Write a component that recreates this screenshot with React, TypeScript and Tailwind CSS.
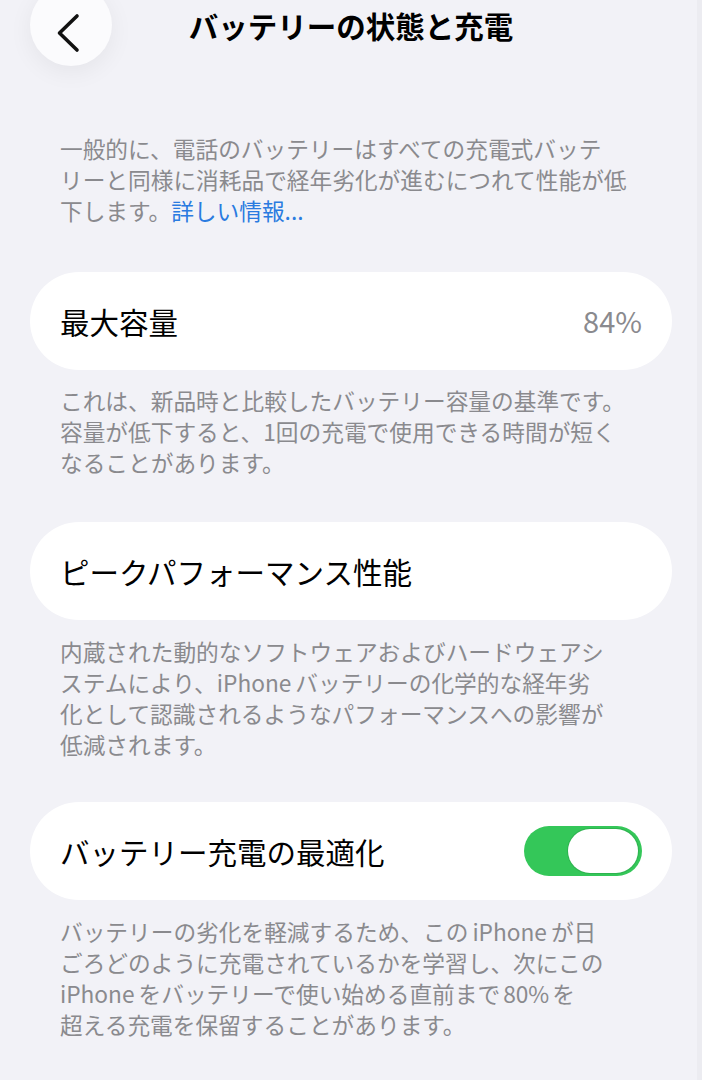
import React from "react";

const Para = ({ lines, className = "" }: { lines: React.ReactNode[]; className?: string }) => (
  <div className={`pl-[60px] pr-[40px] text-[22.7px] leading-[31px] text-[#8a8a8e] whitespace-nowrap ${className}`}>
    {lines.map((l, i) => (
      <div key={i}>{l}</div>
    ))}
  </div>
);

const Card = ({ children, className = "" }: { children: React.ReactNode; className?: string }) => (
  <div className={`mx-[30px] h-[98px] rounded-full bg-white flex items-center justify-between pl-[30px] pr-[30px] ${className}`}>
    {children}
  </div>
);

const IP = ({ l = true, r = true }: { l?: boolean; r?: boolean }) => (
  <span className={`${l ? "ml-[4px]" : ""} ${r ? "mr-[4px]" : ""}`}>iPhone</span>
);

export default function App() {
  return (
    <div
      className="w-full h-[1080px] overflow-hidden bg-[#f2f2f7] shadow-[inset_-5px_0_0_#ececf1]"
      style={{ fontFamily: '"Noto Sans CJK JP", "Noto Sans", sans-serif' }}
    >
      <div className="grid grid-cols-[112px_1fr_112px] h-[50px]">
        <div className="ml-[30px] mt-[-16px] w-[82px] h-[82px] rounded-full bg-[#fbfbfd] shadow-[0_6px_24px_rgba(0,0,0,0.06)] flex items-center justify-center">
          <svg width="26" height="40" viewBox="0 0 26 40" className="mr-[6px] mt-[16px]">
            <path d="M22 3 L4.5 20 L22 37" fill="none" stroke="#111" strokeWidth="3.6" strokeLinecap="round" strokeLinejoin="round" />
          </svg>
        </div>
        <div className="text-center text-[29.5px] leading-[50px] font-bold text-black">
          バッテリーの状態と充電
        </div>
        <div />
      </div>

      <Para
        className="mt-[82.5px]"
        lines={[
          "一般的に、電話のバッテリーはすべての充電式バッテ",
          "リーと同様に消耗品で経年劣化が進むにつれて性能が低",
          <>
            下します。<span className="text-[#2a7be0]">詳しい情報...</span>
          </>,
        ]}
      />

      <Card className="mt-[46.5px]">
        <span className="text-[29.5px] text-black">最大容量</span>
        <span className="text-[29px] text-[#8a8a8e]">84%</span>
      </Card>

      <Para
        className="mt-[14.5px]"
        lines={[
          "これは、新品時と比較したバッテリー容量の基準です。",
          "容量が低下すると、1回の充電で使用できる時間が短く",
          "なることがあります。",
        ]}
      />

      <Card className="mt-[44.5px]">
        <span className="text-[29.5px] text-black">ピークパフォーマンス性能</span>
      </Card>

      <Para
        className="mt-[15.5px]"
        lines={[
          "内蔵された動的なソフトウェアおよびハードウェアシ",
          <>
            ステムにより、<IP l={false} />バッテリーの化学的な経年劣
          </>,
          "化として認識されるようなパフォーマンスへの影響が",
          "低減されます。",
        ]}
      />

      <Card className="mt-[42.5px]">
        <span className="text-[29.5px] text-black">バッテリー充電の最適化</span>
        <div className="w-[118px] h-[50px] rounded-full bg-[#34c759] flex items-center justify-end pr-[4px]">
          <div className="w-[70px] h-[44px] rounded-full bg-white shadow-[0_0_0_1px_rgba(40,160,70,0.5)]" />
        </div>
      </Card>

      <Para
        className="mt-[15.5px]"
        lines={[
          <>
            バッテリーの劣化を軽減するため、この<IP />が日
          </>,
          "ごろどのように充電されているかを学習し、次にこの",
          <>
            <IP l={false} />をバッテリーで使い始める直前まで<span className="ml-[3px] mr-[3px]">80%</span>を
          </>,
          "超える充電を保留することがあります。",
        ]}
      />
    </div>
  );
}
